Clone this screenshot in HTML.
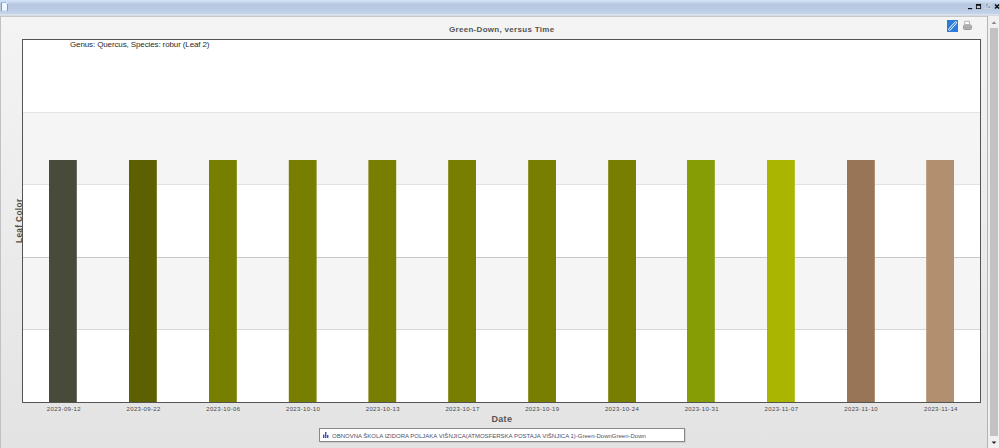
<!DOCTYPE html>
<html><head><meta charset="utf-8">
<style>
html,body{margin:0;padding:0;width:1000px;height:448px;overflow:hidden;background:#e8e8e8;}
body{position:relative;font-family:"Liberation Sans",sans-serif;}
.abs{position:absolute;}
#titlebar{left:0;top:0;width:1000px;height:14px;background:linear-gradient(#d4e3f7 0px,#c9d9ef 2px,#b6c7df 4px,#b8c9e1 8px,#c2d2ea 13px,#c6d6ee 14px);}
#tstrip{left:0;top:14px;width:1000px;height:2px;background:linear-gradient(#dde5ef,#d2d8de);}
#tline{left:0;top:16px;width:987px;height:1px;background:#c6c8ca;}
#content{left:1px;top:17px;width:986px;height:431px;background:linear-gradient(#f4f4f4,#e3e3e3);}
#lborder{left:0;top:16px;width:1px;height:432px;background:#c2c2c2;}
#sbline{left:987px;top:16px;width:1px;height:432px;background:#b4b4b4;}
#sbtrack{left:988px;top:16px;width:11px;height:432px;background:#f0f0f0;}
#sbthumb{left:990px;top:28px;width:8px;height:408px;background:#c2c2c2;}
#rborder{left:999px;top:14px;width:1px;height:434px;background:#c4d2e4;}
.tick{position:absolute;top:406px;width:80px;text-align:center;font-size:6px;letter-spacing:0.35px;color:#484848;white-space:nowrap;line-height:1;}
.txt{position:absolute;white-space:nowrap;color:#333;line-height:1;}
</style></head>
<body>
<div id="titlebar" class="abs"></div>
<div id="tstrip" class="abs"></div>
<div id="tline" class="abs"></div>
<div id="content" class="abs"></div>
<div id="lborder" class="abs"></div>
<div id="sbline" class="abs"></div>
<div id="sbtrack" class="abs"></div>
<div id="sbthumb" class="abs"></div>
<div id="rborder" class="abs"></div>

<svg class="abs" style="left:0;top:0" width="1000" height="448" viewBox="0 0 1000 448">
  <!-- window doc icon -->
  <path d="M1 2 H6 L8 4 V11 H1 Z" fill="#eef6ff"/>
  <rect x="1" y="2" width="5" height="1" fill="#8fbdf0"/>
  <rect x="1" y="3" width="1" height="8" fill="#6ea0dc"/>
  <rect x="7" y="4" width="1" height="7" fill="#6ea0dc"/>
  <rect x="6" y="3" width="1" height="1" fill="#a8cdf4"/>
  <rect x="2" y="10" width="5" height="1" fill="#d6e6f7"/>
  <!-- title buttons -->
  <rect x="968" y="8" width="4.2" height="1.2" fill="#111"/>
  <rect x="976.4" y="4.4" width="4.2" height="4.2" fill="none" stroke="#111" stroke-width="0.9"/>
  <rect x="976" y="4" width="5" height="1.8" fill="#111"/>
  <rect x="985" y="2.6" width="6.4" height="6.4" rx="0.6" fill="#d4dde8"/>
  <rect x="985.8" y="3.4" width="4.8" height="4.8" fill="#9eacbf"/>
  <path d="M986.6 7.6 L989.8 4.2" stroke="#e4eaf1" stroke-width="0.9"/>
  <path d="M988.2 4.2 H989.9 V5.9" fill="none" stroke="#e4eaf1" stroke-width="0.8"/>
  <path d="M995 4.5 L999 8.5 M999 4.5 L995 8.5" stroke="#111" stroke-width="1.5"/>
  <!-- toolbar icons -->
  <rect x="947" y="20" width="11" height="12" fill="#2b7bd9"/>
  <path d="M949.6 29.4 L955.8 22.6" stroke="#fff" stroke-width="2.6" stroke-linecap="round"/>
  <path d="M949.6 29.4 L955.8 22.6" stroke="#2b7bd9" stroke-width="1.1" stroke-linecap="round"/>
  <rect x="964.8" y="21.3" width="4.6" height="3.6" fill="#fff" stroke="#b0b0b0" stroke-width="0.9"/>
  <rect x="963" y="24.5" width="9" height="5.5" rx="2" fill="#9a9a9a"/>
  <rect x="963.8" y="25.6" width="7.4" height="1" fill="#c8c8c8"/>
  <rect x="963.8" y="27.8" width="7.4" height="1" fill="#bcbcbc"/>
  <!-- scrollbar arrows -->
  <path d="M991.6 24 L994 21.3 L996.4 24 Z" fill="#8a8a8a"/>
  <path d="M991.6 441.4 L994 444.1 L996.4 441.4 Z" fill="#222"/>

  <!-- plot -->
  <rect x="22.5" y="39.5" width="958" height="363" fill="#fff"/>
  <rect x="23" y="112.5" width="957" height="72" fill="#f5f5f5"/>
  <rect x="23" y="257.5" width="957" height="72" fill="#f5f5f5"/>
  <g stroke-width="1">
    <line x1="23" y1="112.5" x2="980" y2="112.5" stroke="#e4e4e4"/>
    <line x1="23" y1="184.5" x2="980" y2="184.5" stroke="#e2e2e2"/>
    <line x1="23" y1="257.5" x2="980" y2="257.5" stroke="#c8c8c8"/>
    <line x1="23" y1="329.5" x2="980" y2="329.5" stroke="#d6d6d6"/>
  </g>
  <g>
    <rect x="49" y="160" width="27.8" height="242" fill="#484b3a"/>
    <rect x="129" y="160" width="27.8" height="242" fill="#5c6000"/>
    <rect x="209" y="160" width="27.8" height="242" fill="#787e00"/>
    <rect x="288.8" y="160" width="27.8" height="242" fill="#787e00"/>
    <rect x="368.4" y="160" width="27.8" height="242" fill="#787e00"/>
    <rect x="448.2" y="160" width="27.8" height="242" fill="#787e00"/>
    <rect x="528.2" y="160" width="27.8" height="242" fill="#787e00"/>
    <rect x="608.2" y="160" width="27.8" height="242" fill="#787e00"/>
    <rect x="687" y="160" width="27.8" height="242" fill="#869d05"/>
    <rect x="767" y="160" width="27.8" height="242" fill="#a9b500"/>
    <rect x="847" y="160" width="27.8" height="242" fill="#987556"/>
    <rect x="926.2" y="160" width="27.8" height="242" fill="#b28f6f"/>
  </g>
  <rect x="22.5" y="39.5" width="958" height="363" fill="none" stroke="#545454" stroke-width="1"/>

  <!-- legend box -->
  <rect x="320" y="429" width="366" height="14" fill="#b8b8b8" opacity="0.5"/>
  <rect x="319.5" y="428.5" width="365" height="13" fill="#fff" stroke="#888" stroke-width="1"/>
  <g fill="#3552c4">
    <rect x="323" y="434.5" width="1.4" height="3.5"/>
    <rect x="325" y="432" width="1.4" height="6"/>
    <rect x="327" y="435" width="1.4" height="3"/>
  </g>
</svg>

<div class="txt" style="left:449px;top:25.6px;font-size:8px;letter-spacing:0.3px;font-weight:bold;color:#555;">Green-Down, versus Time</div>
<div class="txt" style="left:70px;top:41px;font-size:8px;letter-spacing:-0.12px;color:#2a2a2a;">Genus: Quercus, Species: robur (Leaf 2)</div>
<div class="txt" style="left:491.5px;top:414.5px;font-size:9px;letter-spacing:0.3px;font-weight:bold;color:#555;">Date</div>
<div class="txt" style="left:332px;top:432.8px;font-size:6px;color:#50506a;">OBNOVNA ŠKOLA IZIDORA POLJAKA VIŠNJICA(ATMOSFERSKA POSTAJA VIŠNJICA 1)-Green-DownGreen-Down</div>
<div class="txt" style="left:16px;top:242.5px;font-size:8.2px;letter-spacing:0.4px;font-weight:bold;color:#505050;transform:rotate(-90deg);transform-origin:0 0;">Leaf Color</div>

<div id="ticks"></div>
<div class="tick" style="left:23.90px">2023-09-12</div>
<div class="tick" style="left:103.63px">2023-09-22</div>
<div class="tick" style="left:183.36px">2023-10-06</div>
<div class="tick" style="left:263.09px">2023-10-10</div>
<div class="tick" style="left:342.82px">2023-10-13</div>
<div class="tick" style="left:422.55px">2023-10-17</div>
<div class="tick" style="left:502.28px">2023-10-19</div>
<div class="tick" style="left:582.01px">2023-10-24</div>
<div class="tick" style="left:661.74px">2023-10-31</div>
<div class="tick" style="left:741.47px">2023-11-07</div>
<div class="tick" style="left:821.20px">2023-11-10</div>
<div class="tick" style="left:900.93px">2023-11-14</div>
</body></html>
